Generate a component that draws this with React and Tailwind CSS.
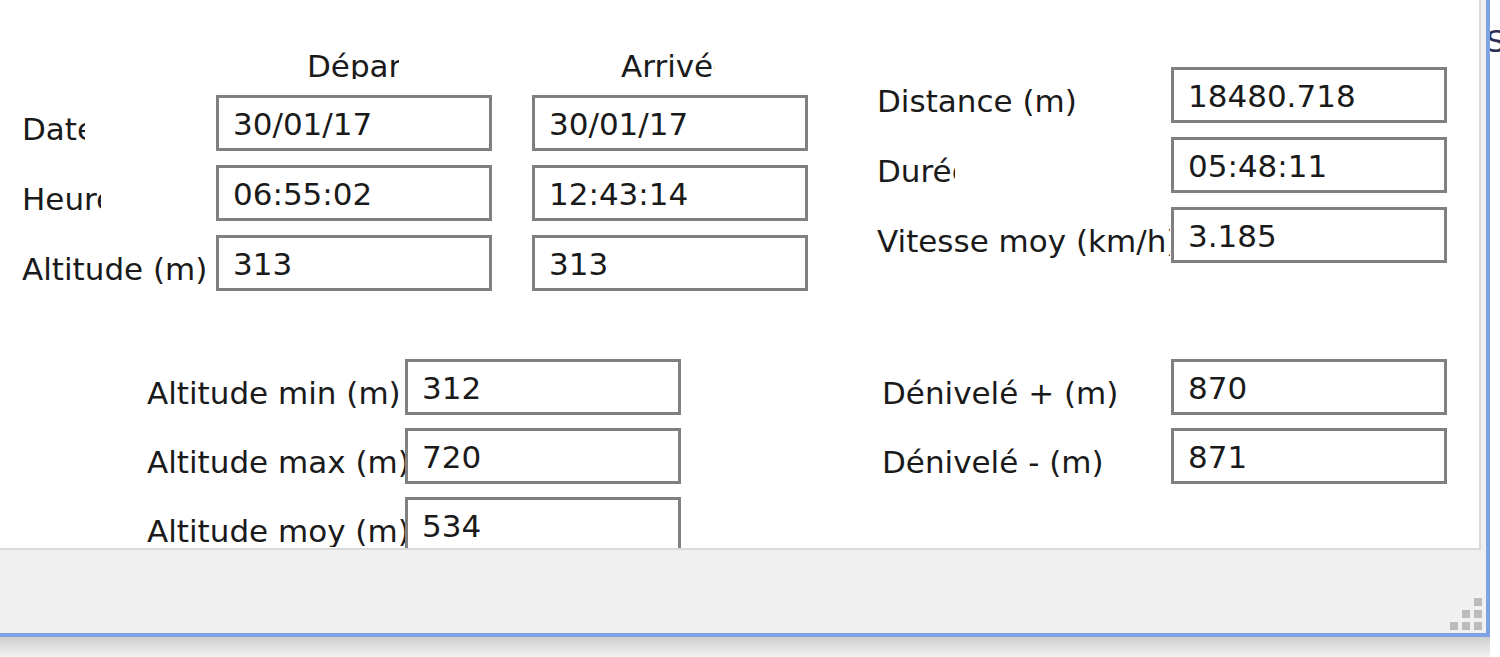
const font = { fontFamily: '"DejaVu Sans", Verdana, sans-serif' }

function Field({ value }) {
  return (
    <div className="w-[276px] h-[56px] shrink-0 border-[3px] border-[#808080] bg-white pl-[14px] pt-[11px] leading-[31px] whitespace-nowrap overflow-hidden">
      {value}
    </div>
  )
}

function Row({ label, labelWidth, clip, value }) {
  return (
    <div className="flex items-start">
      <div className="shrink-0 pt-[19px] leading-[31px]" style={{ width: labelWidth }}>
        <div className="overflow-hidden whitespace-nowrap" style={{ width: clip ?? labelWidth }}>
          {label}
        </div>
      </div>
      <Field value={value} />
    </div>
  )
}

function Grip() {
  const cells = [
    [24, 0],
    [12, 12],
    [24, 12],
    [0, 24],
    [12, 24],
    [24, 24],
  ]
  return (
    <svg width="32" height="32" viewBox="0 0 32 32">
      {cells.map(([x, y]) => (
        <rect key={`${x}-${y}`} x={x} y={y} width="8" height="8" fill="#bcbcbc" />
      ))}
    </svg>
  )
}

export default function App() {
  return (
    <div className="flex w-[1500px] h-[657px] overflow-hidden bg-white text-[31px] text-[#1a1a1a]" style={font}>
      <div className="flex flex-col w-[1490px] shrink-0">
        <div className="w-[1490px] h-[637px] flex flex-col bg-[#f0f0f0] border-r-4 border-b-4 border-[#7ea3e4]">
          {/* dialog content */}
          <div className="w-[1481px] h-[550px] shrink-0 bg-white border-r-2 border-b-2 border-[#dadada] overflow-hidden">
            <div className="flex pl-[22px]">
              <div className="pt-[51px]">
                <div className="flex h-[28px] overflow-hidden leading-[31px]">
                  <div className="w-[285px] shrink-0" />
                  <div className="w-[92px] shrink-0 overflow-hidden whitespace-nowrap">Départ</div>
                  <div className="w-[222px] shrink-0" />
                  <div className="w-[94px] shrink-0 overflow-hidden whitespace-nowrap">Arrivée</div>
                </div>
                <div className="mt-[16px] flex flex-col gap-[14px]">
                  <div className="flex items-start">
                    <div className="w-[194px] shrink-0 pt-[19px] leading-[31px]">
                      <div className="w-[63px] overflow-hidden whitespace-nowrap">Date</div>
                    </div>
                    <Field value="30/01/17" />
                    <div className="w-[40px] shrink-0" />
                    <Field value="30/01/17" />
                  </div>
                  <div className="flex items-start">
                    <div className="w-[194px] shrink-0 pt-[19px] leading-[31px]">
                      <div className="w-[79px] overflow-hidden whitespace-nowrap">Heure</div>
                    </div>
                    <Field value="06:55:02" />
                    <div className="w-[40px] shrink-0" />
                    <Field value="12:43:14" />
                  </div>
                  <div className="flex items-start">
                    <div className="w-[194px] shrink-0 pt-[19px] leading-[31px] whitespace-nowrap overflow-hidden">
                      Altitude (m)
                    </div>
                    <Field value="313" />
                    <div className="w-[40px] shrink-0" />
                    <Field value="313" />
                  </div>
                </div>
              </div>

              <div className="ml-[69px] pt-[67px] flex flex-col gap-[14px]">
                <Row label="Distance (m)" labelWidth={294} value="18480.718" />
                <Row label="Durée" labelWidth={294} clip={78} value="05:48:11" />
                <div className="flex items-start">
                  <div className="w-[294px] shrink-0 pt-[9px] leading-[31px]">
                    <div className="relative z-10 w-[293px] h-[43px] pt-[10px] bg-white overflow-hidden whitespace-nowrap">
                      Vitesse moy (km/h)
                    </div>
                  </div>
                  <Field value="3.185" />
                </div>
              </div>
            </div>

            <div className="flex pl-[147px] mt-[68px]">
              <div className="flex flex-col gap-[13px]">
                <Row label="Altitude min (m)" labelWidth={258} value="312" />
                <Row label="Altitude max (m)" labelWidth={258} value="720" />
                <Row label="Altitude moy (m)" labelWidth={258} value="534" />
              </div>
              <div className="ml-[201px] flex flex-col gap-[13px]">
                <Row label="Dénivelé + (m)" labelWidth={289} value="870" />
                <Row label="Dénivelé - (m)" labelWidth={289} value="871" />
              </div>
            </div>
          </div>

          {/* status bar with resize grip */}
          <div className="flex-1 flex justify-end items-end pr-[4px] pb-[3px]">
            <Grip />
          </div>
        </div>
        <div className="h-[20px] w-[1490px] bg-gradient-to-b from-[#cfcfcf] to-[#f2f2f2]" />
      </div>

      <div className="w-[10px] shrink-0 overflow-hidden pt-[26px] leading-[31px] text-[#2a2f55] whitespace-nowrap">
        <span className="-ml-[4px]">Se</span>
      </div>
    </div>
  )
}
